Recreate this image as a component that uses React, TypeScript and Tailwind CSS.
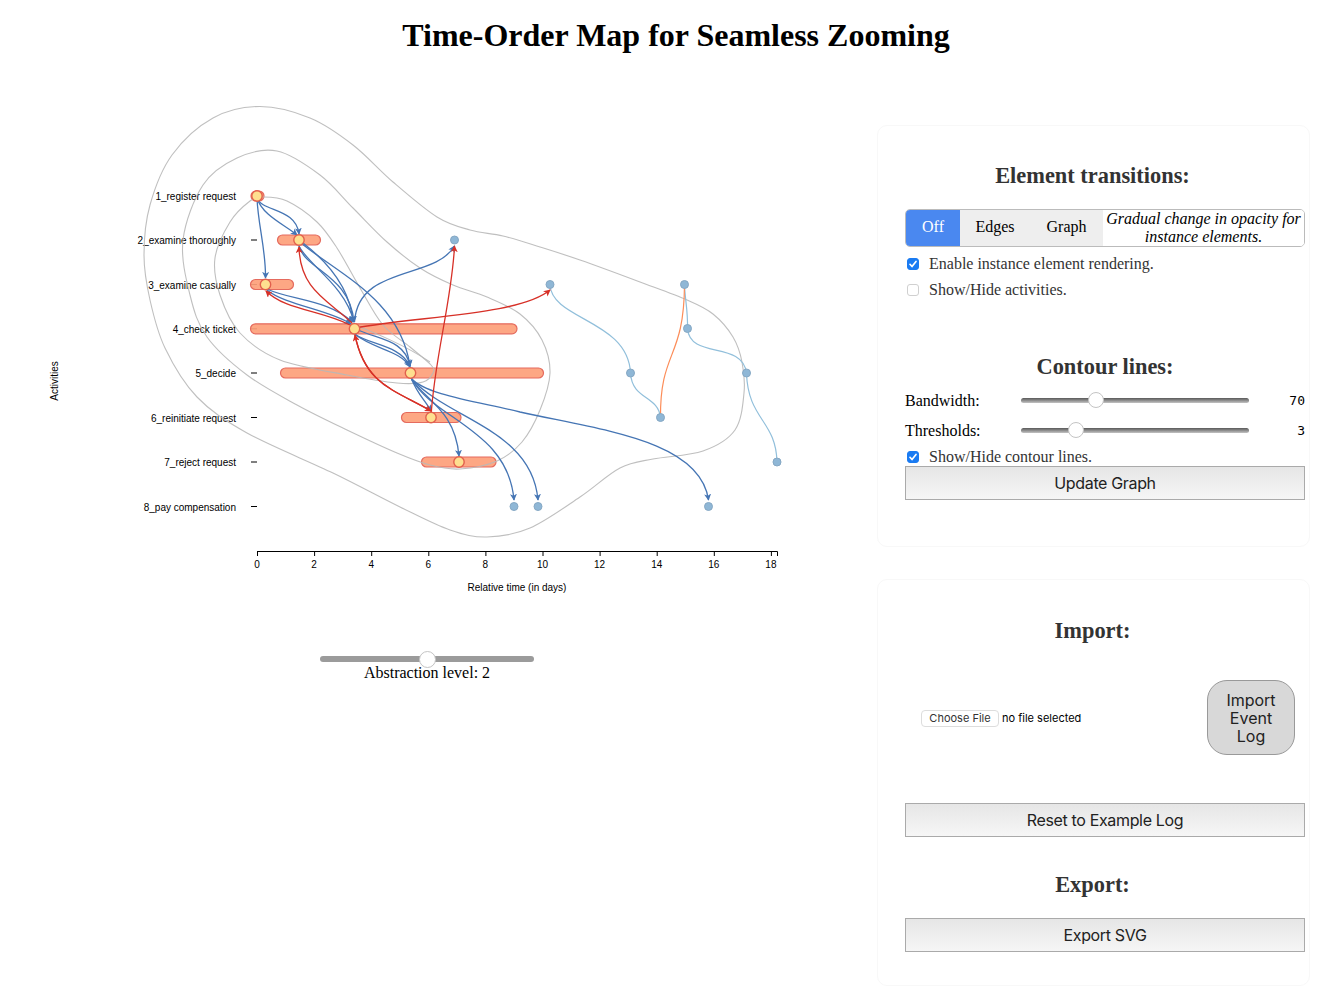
import React from "react";

const rowY = [196, 240, 284.5, 328.8, 373, 417.5, 462, 506.5];
const rowLabels = ["1_register request", "2_examine thoroughly", "3_examine casually", "4_check ticket", "5_decide", "6_reinitiate request", "7_reject request", "8_pay compensation"];
const bars = [
  [251, 264, 0], [277.5, 320.5, 1], [250.5, 293.5, 2], [250.5, 517, 3], [280.5, 543.5, 4], [401.5, 461, 5], [421.5, 496, 6],
];
const nodes = [[257, 196], [299, 240], [265.5, 284.5], [354.5, 328.8], [410.5, 373], [431, 417.5], [459, 462]];
const dots = [[454.5, 240], [550, 284.5], [684.5, 284.5], [687.5, 328.5], [630.5, 373], [746.5, 373], [660.5, 417.5], [777, 462], [514, 506.5], [538, 506.5], [708.5, 506.5]];

const smooth = (p: number[][]) => {
  const n = p.length;
  let d = `M${p[0][0]} ${p[0][1]}`;
  for (let i = 0; i < n; i++) {
    const a = p[(i - 1 + n) % n], b = p[i], c = p[(i + 1) % n], e = p[(i + 2) % n];
    d += ` C${(b[0] + (c[0] - a[0]) / 6).toFixed(1)} ${(b[1] + (c[1] - a[1]) / 6).toFixed(1)} ${(c[0] - (e[0] - b[0]) / 6).toFixed(1)} ${(c[1] - (e[1] - b[1]) / 6).toFixed(1)} ${c[0]} ${c[1]}`;
  }
  return d + "Z";
};

const contours = [
  [[260, 106.5], [310, 118], [353, 145], [393, 182], [437, 217], [470, 230], [503, 236], [540, 247], [580, 260], [640, 282], [687, 300], [713, 314], [733, 337], [742, 362], [744, 393], [735, 430], [703, 451], [653, 459], [620, 468], [580, 497], [530, 528], [487, 537], [450, 530], [400, 507], [333, 473], [247, 433], [197, 397], [165, 348], [150, 300], [144, 255], [150, 205], [172, 155], [213, 118]],
  [[277, 151], [320, 175], [353, 208], [387, 242], [420, 268], [453, 285], [487, 297], [520, 314], [542, 340], [550, 373], [540, 410], [522, 442], [497, 461], [460, 469], [430, 465], [397, 453], [347, 430], [297, 405], [247, 375], [207, 337], [190, 295], [183, 240], [203, 185], [237, 158]],
  [[263, 197], [287, 201], [317, 222], [337, 248], [360, 288], [383, 325], [410, 347], [431, 365], [433, 373], [423, 382], [397, 383], [347, 375], [280, 360], [240, 333], [220, 295], [215, 258], [230, 222], [250, 201]],
];

const blue = [
  "M257 198 C262 212 296 208 299 234",
  "M257 198 C262 215 285 225 297 235",
  "M257 198 C258 225 266 250 265.5 278",
  "M299 246 C305 270 350 275 354 322",
  "M299 246 C308 265 345 285 354 322",
  "M303 243 C325 260 350 285 353 322",
  "M301 243 C340 275 400 300 410 366",
  "M267 289 C290 300 330 300 352 322",
  "M267 290 C285 305 330 310 351 324",
  "M354.5 322 C358 265 435 280 454.5 246",
  "M354.5 334 C370 345 400 345 410 366",
  "M354.5 334 C375 350 400 350 410 367",
  "M358 330 C380 340 405 340 410 366",
  "M411.5 379 C425 400 455 410 459 456",
  "M411.5 379 C435 420 508 430 514 500",
  "M411.5 379 C450 420 532 430 538 500",
  "M411 378 C425 395 480 402 520 412 C600 430 700 440 708.5 500",
  "M411.5 379 C418 395 425 400 431 411",
];
const red = [
  "M352 323 C328 300 300 290 299 247",
  "M350 325 C320 310 285 310 266 291",
  "M431 411 C395 390 365 385 355 335",
  "M355 335 C365 385 395 390 431 411",
  "M431 417 C434 360 452 300 454.5 246",
  "M355 328 C420 316 520 315 550 290",
];
const light = [
  "M550 285 C552 320 628 320 630.5 373",
  "M630.5 373 C632 400 658 395 660.5 417.5",
  "M684.5 284.5 C685 300 688 310 687.5 328.5",
  "M687.5 328.5 C690 360 742 340 746.5 373",
  "M746.5 373 C748 420 776 420 777 462",
];

function Check({ on, label }: { on?: boolean; label: string }) {
  return (
    <label className="flex items-center h-full text-[16px] text-[#333]">
      <span className="relative w-[12px] h-[12px] ml-[2px] mr-[10px] flex">
        <input type="checkbox" defaultChecked={on} className="appearance-none w-[12px] h-[12px] rounded-[3px] border border-[#d0d0d0] bg-white checked:bg-[#1a7bf2] checked:border-[#1a7bf2]" />
        {on && (
          <svg viewBox="0 0 12 12" className="absolute inset-0 w-[12px] h-[12px] pointer-events-none">
            <path d="M3 6.3 L5 8.5 L9 3.5" fill="none" stroke="#fff" strokeWidth="1.7" strokeLinecap="round" strokeLinejoin="round" />
          </svg>
        )}
      </span>
      {label}
    </label>
  );
}

function SliderRow({ label, min, max, value }: { label: string; min: number; max: number; value: number }) {
  return (
    <div className="flex items-center h-[30px] text-[16px] text-black">
      <span className="w-[116px] pt-[2px]">{label}</span>
      <input
        type="range"
        min={min}
        max={max}
        defaultValue={value}
        className="appearance-none w-[228px] h-[5px] rounded-full bg-gradient-to-b from-[#5a5a5a] to-[#c4c4c4] [&::-webkit-slider-thumb]:appearance-none [&::-webkit-slider-thumb]:w-[16px] [&::-webkit-slider-thumb]:h-[16px] [&::-webkit-slider-thumb]:rounded-full [&::-webkit-slider-thumb]:bg-white [&::-webkit-slider-thumb]:border [&::-webkit-slider-thumb]:border-[#c4c4c4]"
      />
      <span className="w-[56px] pt-[2px] text-right text-[13px] font-['DejaVu_Sans_Mono',monospace]">{value}</span>
    </div>
  );
}

function WideButton({ label, className }: { label: string; className: string }) {
  return (
    <button className={"block w-[400px] h-[34px] border border-[#aaa] bg-gradient-to-b from-[#e6e6e6] to-[#f6f6f6] text-[16px] tracking-[-0.35px] text-[#222] font-['Inter',sans-serif] " + className}>
      {label}
    </button>
  );
}

const headingCls = "h-[26px] leading-[26px] text-[22.4px] font-bold text-[#333] text-center";
const cardCls = "w-[433px] border border-[#f8f8f8] rounded-[10px] pl-[27px] pr-[4px]";

export default function App() {
  return (
    <div className="w-[1341px] font-['Liberation_Serif',serif] text-black bg-white">
      <h1 className="h-[70px] pt-[16px] pl-[11px] text-center text-[32px] leading-[38px] font-bold">Time-Order Map for Seamless Zooming</h1>
      <div className="flex items-start">
        <div className="w-[877px] shrink-0">
          <svg viewBox="0 70 877 560" className="block w-[877px] h-[560px] font-['Liberation_Sans',sans-serif]">
            <defs>
              <marker id="ab" viewBox="0 0 8 8" refX="7" refY="4" markerWidth="7" markerHeight="7" markerUnits="userSpaceOnUse" orient="auto">
                <path d="M0 0 L8 4 L0 8 L2 4 Z" fill="#4575b4" />
              </marker>
              <marker id="ar" viewBox="0 0 8 8" refX="7" refY="4" markerWidth="7" markerHeight="7" markerUnits="userSpaceOnUse" orient="auto">
                <path d="M0 0 L8 4 L0 8 L2 4 Z" fill="#d73027" />
              </marker>
            </defs>
            {rowY.map((y, i) => (
              <g key={i}>
                <line x1="251" x2="257" y1={y} y2={y} stroke="#000" strokeWidth="1" />
                <text x="236" y={y + 4} textAnchor="end" fontSize="10" fill="#000">{rowLabels[i]}</text>
              </g>
            ))}
            <text transform="translate(58 381) rotate(-90)" textAnchor="middle" fontSize="10" fill="#000">Activities</text>
            <path d="M257.5 556 V551.5 H777.5 V556" fill="none" stroke="#000" strokeWidth="1" />
            {[0, 2, 4, 6, 8, 10, 12, 14, 16, 18].map((t) => (
              <g key={t}>
                <line x1={257.5 + t * 28.55} x2={257.5 + t * 28.55} y1="551" y2="556" stroke="#000" />
                <text x={257 + t * 28.55} y="568" textAnchor="middle" fontSize="10" fill="#000">{t}</text>
              </g>
            ))}
            <text x="517" y="591" textAnchor="middle" fontSize="10" fill="#000">Relative time (in days)</text>

            {bars.map(([a, b, r]) => (
              <rect key={r} x={a} y={rowY[r] - 5} width={b - a} height="10" rx="5" fill="#fd9f7a" fillOpacity="0.92" stroke="#e56b5e" strokeWidth="1.2" />
            ))}
            {contours.map((c, i) => (
              <path key={i} d={smooth(c)} fill="none" stroke="#b8b8b8" strokeOpacity="0.9" strokeWidth="1.1" />
            ))}
            <path d="M355 325 C375 333 405 345 430 362" fill="none" stroke="#b8b8b8" strokeOpacity="0.9" strokeWidth="1.1" />
            {light.map((d, i) => (
              <path key={i} d={d} fill="none" stroke="#91bfdb" strokeWidth="1.2" />
            ))}
            <path d="M660.5 417.5 C660 350 684 360 684.5 284.5" fill="none" stroke="#fc8d59" strokeWidth="1.2" />
            {dots.map(([x, y], i) => (
              <circle key={i} cx={x} cy={y} r="4" fill="#8fb7d6" stroke="#86a8c4" strokeWidth="1" />
            ))}
            {blue.map((d, i) => (
              <path key={i} d={d} fill="none" stroke="#4575b4" strokeWidth="1.3" markerEnd="url(#ab)" />
            ))}
            {red.map((d, i) => (
              <path key={i} d={d} fill="none" stroke="#d73027" strokeWidth="1.3" markerEnd="url(#ar)" />
            ))}
            {nodes.map(([x, y], i) => (
              <circle key={i} cx={x} cy={y} r="5.2" fill="#fedf8f" stroke="#e2604d" strokeWidth="1.4" />
            ))}
          </svg>
          <div className="ml-[320px] w-[214px] flex flex-col items-center mt-[26px]">
            <input
              type="range"
              min={0}
              max={4}
              defaultValue={2}
              className="appearance-none block w-[214px] h-[6px] rounded-full bg-[#9b9b9b] [&::-webkit-slider-thumb]:appearance-none [&::-webkit-slider-thumb]:w-[17px] [&::-webkit-slider-thumb]:h-[17px] [&::-webkit-slider-thumb]:rounded-full [&::-webkit-slider-thumb]:bg-white [&::-webkit-slider-thumb]:border [&::-webkit-slider-thumb]:border-[#c4c4c4]"
            />
            <div className="mt-[1px] text-[16px] leading-[20px] whitespace-nowrap">Abstraction level: 2</div>
          </div>
        </div>

        <div className="w-[433px] mt-[55px]">
          <div className={cardCls + " pt-[37px] pb-[46px]"}>
            <h2 className={headingCls + " -ml-[27px] -mr-[2px]"}>Element transitions:</h2>
            <div className="mt-[20px] w-[400px] h-[38px] flex border border-[#bbb] rounded-[5px] overflow-hidden text-[16px]">
              <div className="w-[54px] pb-[2px] bg-[#4a88f0] text-white flex items-center justify-center">Off</div>
              <div className="w-[70px] pb-[2px] bg-[#eee] flex items-center justify-center">Edges</div>
              <div className="w-[73px] pb-[2px] bg-[#eee] flex items-center justify-center">Graph</div>
              <div className="flex-1 bg-white italic text-center text-[16px] leading-[18px]">Gradual change in opacity for instance elements.</div>
            </div>
            <div className="h-[26px] mt-[4px]"><Check on label="Enable instance element rendering." /></div>
            <div className="h-[26px]"><Check label="Show/Hide activities." /></div>
            <h2 className={headingCls + " mt-[51px]"}>Contour lines:</h2>
            <div className="mt-[5px]">
              <SliderRow label="Bandwidth:" min={10} max={200} value={70} />
              <SliderRow label="Thresholds:" min={1} max={10} value={3} />
            </div>
            <div className="h-[19px] mt-[2px]"><Check on label="Show/Hide contour lines." /></div>
            <WideButton label="Update Graph" className="" />
          </div>

          <div className={cardCls + " mt-[32px] pt-[38px] pb-[33px]"}>
            <h2 className={headingCls + " -ml-[27px] -mr-[2px]"}>Import:</h2>
            <div className="mt-[36px] w-[400px] h-[75px] pl-[16px] pr-[10px] flex items-center justify-between font-['Inter',sans-serif]">
              <div className="flex items-center mt-[2px] text-[11px] text-black">
                <button className="w-[78px] h-[17px] rounded-[4px] border border-[#ddd] bg-white text-[#333] text-[11px] leading-none">Choose File</button>
                <span className="ml-[3px]">no file selected</span>
              </div>
              <button className="w-[88px] h-[75px] rounded-[20px] border border-[#999] bg-[#d8d8d8] text-[16px] leading-[18px] text-[#222]">Import<br />Event<br />Log</button>
            </div>
            <WideButton label="Reset to Example Log" className="mt-[48px]" />
            <h2 className={headingCls + " mt-[35px] -ml-[27px] -mr-[2px]"}>Export:</h2>
            <WideButton label="Export SVG" className="mt-[20px]" />
          </div>
        </div>
      </div>
    </div>
  );
}
